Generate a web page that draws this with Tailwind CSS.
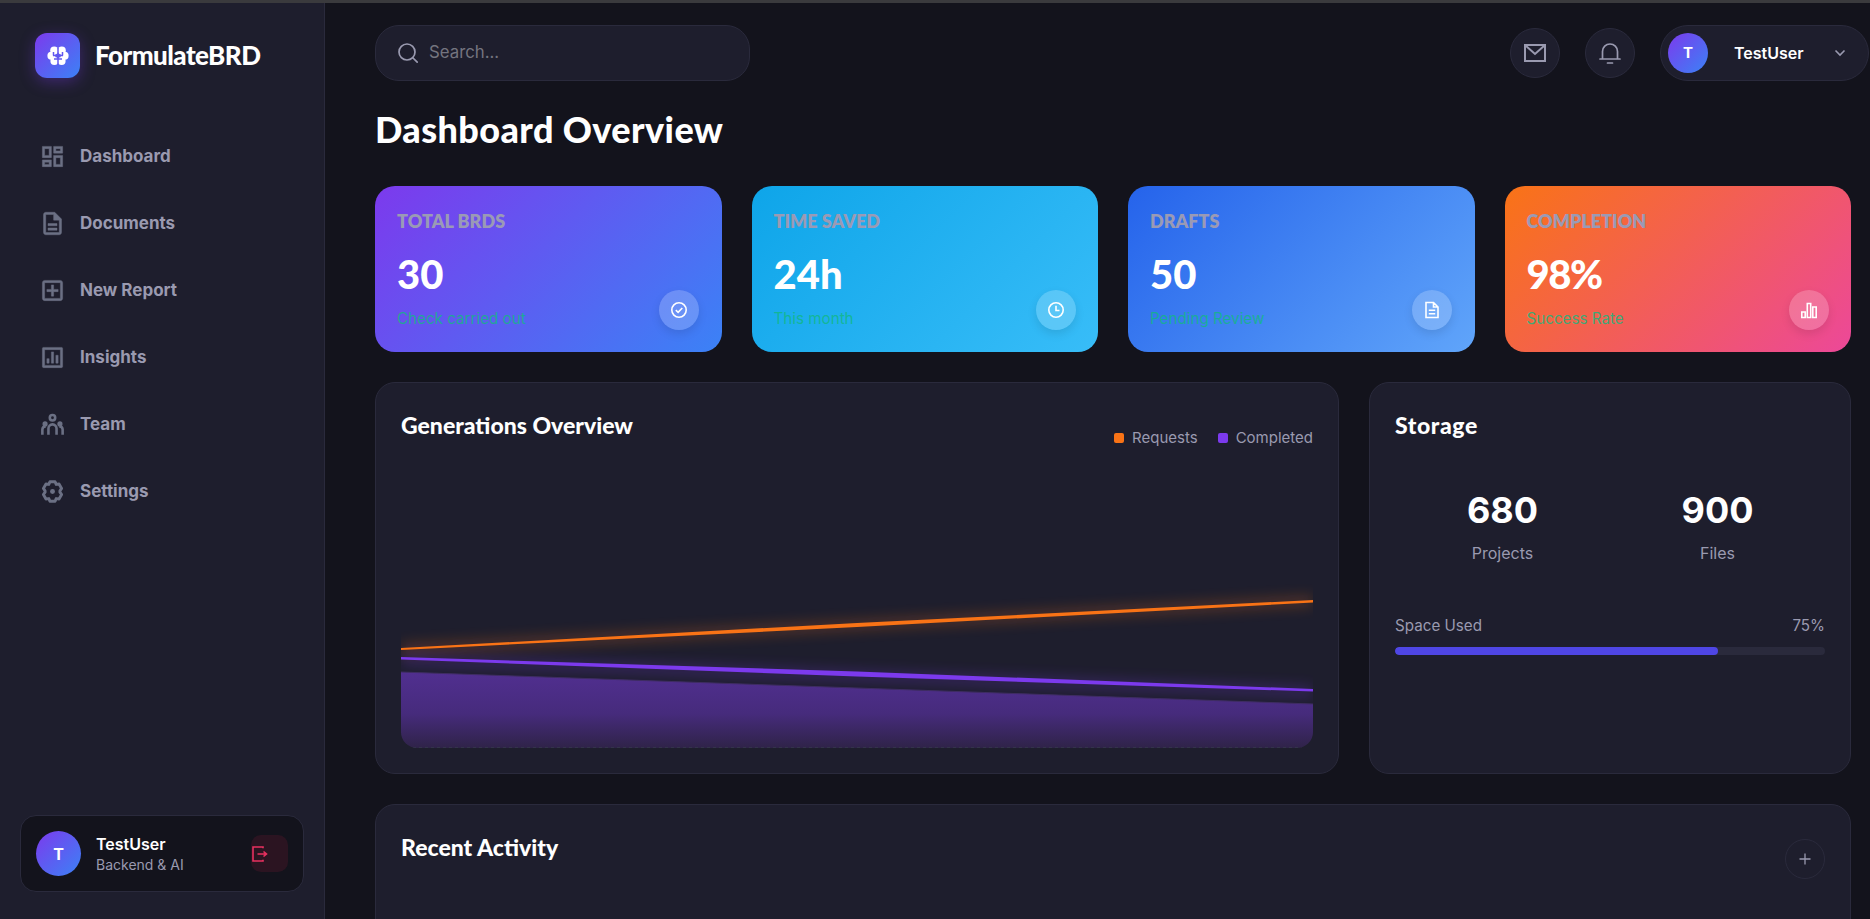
<!DOCTYPE html>
<html lang="en">
<head>
<meta charset="utf-8">
<title>FormulateBRD</title>
<script src="https://cdn.jsdelivr.net/npm/@tailwindcss/browser@4"></script>
</head>
<body class="h-screen overflow-hidden bg-[#13131c] font-['Inter',sans-serif] text-white">
<div class="h-[3px] bg-[#3a3a3d]"></div>
<div class="flex h-[916px] overflow-hidden">
  <!-- Sidebar -->
  <aside class="flex w-[325px] shrink-0 flex-col justify-between border-r border-[#2a2a3c] bg-[#1e1e2d] px-[20px] pb-[27px]">
    <div>
      <div class="flex items-center gap-[15px] pl-[15px] pt-[30px]">
        <div class="flex h-[45px] w-[45px] items-center justify-center rounded-[12px] bg-[linear-gradient(135deg,#7c3aed,#3b82f6)] shadow-[0_4px_15px_rgba(124,58,237,0.35)]">
          <svg class="h-[24px] w-[24px]" viewBox="0 0 24 24">
            <g fill="#fff"><circle cx="8.2" cy="6.6" r="4"/><circle cx="15.8" cy="6.6" r="4"/><circle cx="5.4" cy="11.8" r="4"/><circle cx="18.6" cy="11.8" r="4"/><circle cx="8.4" cy="17" r="4"/><circle cx="15.6" cy="17" r="4"/></g>
            <path d="M12 4v17M7 11.5h5M12 11.5h5M7.5 8v3.5M16.5 8v3.5M8 15h4M16 15h-4" fill="none" stroke="#6257f0" stroke-width="1.5"/>
          </svg>
        </div>
        <span class="font-['Lato',sans-serif] text-[26px] font-black tracking-[-0.55px]">FormulateBRD</span>
      </div>
      <nav class="mt-[45px] flex flex-col pl-[19px] text-[17px] font-bold text-[#9a9ab0]">
        <a class="flex h-[67px] items-center gap-[14px]"><svg class="h-[27px] w-[27px] shrink-0 fill-[#6b7084] stroke-[#6b7084] stroke-[0.4]" viewBox="0 0 24 24"><path d="M19 5v2h-4V5h4M9 5v6H5V5h4m10 8v6h-4v-6h4M9 17v2H5v-2h4M21 3h-8v6h8V3zM11 3H3v10h8V3zm10 8h-8v10h8V11zm-10 4H3v6h8v-6z"/></svg>Dashboard</a>
        <a class="flex h-[67px] items-center gap-[14px]"><svg class="h-[27px] w-[27px] shrink-0 fill-[#6b7084] stroke-[#6b7084] stroke-[0.4]" viewBox="0 0 24 24"><path d="M8 16h8v2H8zm0-4h8v2H8zm6-10H6c-1.100 0-2 .9-2 2v16c0 1.100.89 2 1.990 2H18c1.100 0 2-.9 2-2V8l-6-6zm4 18H6V4h7v5h5v11z"/></svg>Documents</a>
        <a class="flex h-[67px] items-center gap-[14px]"><svg class="h-[27px] w-[27px] shrink-0 fill-[#6b7084] stroke-[#6b7084] stroke-[0.4]" viewBox="0 0 24 24"><path d="M19 3H5c-1.110 0-2 .9-2 2v14c0 1.100.89 2 2 2h14c1.100 0 2-.9 2-2V5c0-1.100-.9-2-2-2zm0 16H5V5h14v14zm-8-2h2v-4h4v-2h-4V7h-2v4H7v2h4z"/></svg>New Report</a>
        <a class="flex h-[67px] items-center gap-[14px]"><svg class="h-[27px] w-[27px] shrink-0 fill-[#6b7084] stroke-[#6b7084] stroke-[0.4]" viewBox="0 0 24 24"><path d="M20 3H4c-.6 0-1 .4-1 1v16c0 .6.4 1 1 1h16c.6 0 1-.4 1-1V4c0-.6-.4-1-1-1zm-1 16H5V5h14v14zM7 13h2v4H7zm4-6h2v10h-2zm4 3h2v7h-2z"/></svg>Insights</a>
        <a class="flex h-[67px] items-center gap-[14px]"><svg class="h-[27px] w-[27px] shrink-0" viewBox="0 0 24 24" fill="none" stroke="#6b7084" stroke-width="2.300"><circle cx="12" cy="6" r="2.400"/><circle cx="5.400" cy="11.500" r="2.300" fill="#6b7084" stroke="none"/><circle cx="18.600" cy="11.500" r="2.300" fill="#6b7084" stroke="none"/><path d="M8.400 21v-5.500a3.600 3.600 0 0 1 7.200 0V21M3 21v-4.500c0-1.600 1.300-2.700 3-2.700M21 21v-4.500c0-1.600-1.300-2.700-3-2.700"/></svg>Team</a>
        <a class="flex h-[67px] items-center gap-[14px]"><svg class="h-[27px] w-[27px] shrink-0" viewBox="0 0 24 24" fill="none" stroke="#6b7084"><path stroke-width="2.600" stroke-linejoin="round" d="M9.700 3.400h4.600l1 2.300 2.500-.3 2.300 3.900-1.500 2.100 0 1.200 1.500 2.100-2.300 3.900-2.500-.3-1 2.300H9.700l-1-2.300-2.500.3-2.300-3.900 1.500-2.100 0-1.200-1.500-2.100 2.300-3.900 2.500.3z"/><circle cx="12" cy="12" r="2.200" fill="#6b7084" stroke="none"/></svg>Settings</a>
      </nav>
    </div>
    <div class="flex h-[77px] w-[284px] items-center rounded-[16px] border border-[#2a2a3c] bg-[#13131c] px-[15px]">
      <div class="flex h-[45px] w-[45px] shrink-0 items-center justify-center rounded-full bg-[linear-gradient(135deg,#7c3aed,#3b82f6)] text-[16px] font-bold">T</div>
      <div class="ml-[15px] flex-1">
        <div class="text-[16px] font-semibold leading-[22px]">TestUser</div>
        <div class="text-[14px] leading-[20px] text-[#9a9ab0]">Backend &amp; AI</div>
      </div>
      <div class="flex h-[37px] w-[37px] shrink-0 items-center rounded-[10px] bg-[#e11d48]/12">
        <svg class="h-[18px] w-[18px]" viewBox="0 0 18 18" fill="none" stroke="#e8305f" stroke-width="1.600"><path d="M12 3.200V2H2v14h10v-1.200M6.500 9h9M12.500 6.500 15.500 9l-3 2.500"/></svg>
      </div>
    </div>
  </aside>

  <!-- Main -->
  <main class="min-w-0 flex-1 pl-[50px] pr-px pt-[22px]">
    <header class="flex h-[56px] items-center justify-between">
      <div class="flex h-[56px] w-[375px] items-center gap-[10px] rounded-[24px] border border-[#2a2a3c] bg-[#1e1e2d] pl-[21px]">
        <svg class="h-[22px] w-[22px]" viewBox="0 0 22 22" fill="none" stroke="#9a9ab0" stroke-width="1.700" stroke-linecap="round"><circle cx="10" cy="10" r="8"/><path d="m16 16 4.200 4.200"/></svg>
        <span class="text-[16.8px] text-[#74747f]">Search...</span>
      </div>
      <div class="flex items-center">
        <button class="flex h-[50px] w-[50px] items-center justify-center rounded-full border border-[#2a2a3c] bg-[#1e1e2d]">
          <svg class="h-[22px] w-[22px]" viewBox="0 0 22 22" fill="none" stroke="#9a9ab0" stroke-width="2"><path d="M1 3h20v16H1zM1.500 3.500 11 12l9.500-8.500"/></svg>
        </button>
        <button class="ml-[25px] flex h-[50px] w-[50px] items-center justify-center rounded-full border border-[#2a2a3c] bg-[#1e1e2d]">
          <svg class="h-[24px] w-[24px]" viewBox="0 0 24 24" fill="none" stroke="#9a9ab0" stroke-width="1.700" stroke-linecap="round"><path d="M2 18h20M4.500 18v-7.500a7.500 7.500 0 0 1 15 0V18M9.500 22h5"/></svg>
        </button>
        <div class="ml-[25px] flex h-[56px] w-[209px] items-center rounded-[28px] border border-[#2a2a3c] bg-[#1e1e2d] pl-[7px]">
          <div class="flex h-[40px] w-[40px] shrink-0 items-center justify-center rounded-full bg-[linear-gradient(135deg,#7c3aed,#3b82f6)] text-[15px] font-bold">T</div>
          <span class="ml-[26px] text-[16px] font-semibold">TestUser</span>
          <svg class="ml-[30px] h-[12px] w-[12px]" viewBox="0 0 12 12" fill="none" stroke="#9a9ab0" stroke-width="1.600"><path d="m1.500 3.500 4.500 4.500 4.500-4.500"/></svg>
        </div>
      </div>
    </header>

    <div class="mr-[18px]">
      <h1 class="mt-[28px] font-['Lato',sans-serif] text-[36px] font-black leading-[40px] tracking-[0.4px]">Dashboard Overview</h1>

      <section class="mt-[37px] grid grid-cols-4 gap-[30px]">
        <div class="relative h-[166px] rounded-[20px] bg-[linear-gradient(135deg,#7c3aed,#3b82f6)] px-[22px] pt-[22px]">
          <div class="font-['Lato',sans-serif] text-[18px] font-extrabold uppercase leading-[26px] text-[#9a9ab5]">Total BRDs</div>
          <div class="mt-[16px] font-['Lato',sans-serif] text-[40px] font-black leading-[48px]">30</div>
          <div class="mt-[10px] text-[15.2px] leading-[22px] text-[#10b981]/80">Check carried out</div>
          <div class="absolute bottom-[22px] right-[23px] flex h-[40px] w-[40px] items-center justify-center rounded-full bg-white/20 shadow-[0_4px_10px_rgba(0,0,0,0.1)]">
            <svg class="h-[18px] w-[18px]" viewBox="0 0 18 18" fill="none" stroke="#fff" stroke-width="1.600"><circle cx="9" cy="9" r="7.200"/><path d="m5.800 9.200 2.300 2.200 4.200-4.400"/></svg>
          </div>
        </div>
        <div class="relative h-[166px] rounded-[20px] bg-[linear-gradient(135deg,#0ea5e9,#38bdf8)] px-[22px] pt-[22px]">
          <div class="font-['Lato',sans-serif] text-[18px] font-extrabold uppercase leading-[26px] text-[#9a9ab5]">Time Saved</div>
          <div class="mt-[16px] font-['Lato',sans-serif] text-[40px] font-black leading-[48px]">24h</div>
          <div class="mt-[10px] text-[15.2px] leading-[22px] text-[#10b981]/80">This month</div>
          <div class="absolute bottom-[22px] right-[22px] flex h-[40px] w-[40px] items-center justify-center rounded-full bg-white/20 shadow-[0_4px_10px_rgba(0,0,0,0.1)]">
            <svg class="h-[18px] w-[18px]" viewBox="0 0 18 18" fill="none" stroke="#fff" stroke-width="1.600"><circle cx="9" cy="9" r="7.200"/><path d="M9 4.800V9.500h3.500"/></svg>
          </div>
        </div>
        <div class="relative h-[166px] rounded-[20px] bg-[linear-gradient(135deg,#2563eb,#60a5fa)] px-[22px] pt-[22px]">
          <div class="font-['Lato',sans-serif] text-[18px] font-extrabold uppercase leading-[26px] text-[#9a9ab5]">Drafts</div>
          <div class="mt-[16px] font-['Lato',sans-serif] text-[40px] font-black leading-[48px]">50</div>
          <div class="mt-[10px] text-[15.2px] leading-[22px] text-[#10b981]/80">Pending Review</div>
          <div class="absolute bottom-[22px] right-[23px] flex h-[40px] w-[40px] items-center justify-center rounded-full bg-white/20 shadow-[0_4px_10px_rgba(0,0,0,0.1)]">
            <svg class="h-[18px] w-[18px]" viewBox="0 0 18 18" fill="none" stroke="#fff" stroke-width="1.600"><path d="M3 1.500h7.500L15 6v10.500H3zM10.500 1.500V6H15M5.800 9.300h6.400M5.800 12.800h6.400"/></svg>
          </div>
        </div>
        <div class="relative h-[166px] rounded-[20px] bg-[linear-gradient(135deg,#f97316,#ec4899)] px-[22px] pt-[22px]">
          <div class="font-['Lato',sans-serif] text-[18px] font-extrabold uppercase leading-[26px] text-[#9a9ab5]">Completion</div>
          <div class="mt-[16px] font-['Lato',sans-serif] text-[40px] font-black leading-[48px] tracking-[-1.5px]">98%</div>
          <div class="mt-[10px] text-[15.2px] leading-[22px] text-[#10b981]/80">Success Rate</div>
          <div class="absolute bottom-[22px] right-[22px] flex h-[40px] w-[40px] items-center justify-center rounded-full bg-white/20 shadow-[0_4px_10px_rgba(0,0,0,0.1)]">
            <svg class="h-[18px] w-[18px]" viewBox="0 0 18 18" fill="none" stroke="#fff" stroke-width="1.600"><path d="M1.800 11h3.400v5.500H1.800zM7.300 2.500h3.400v14H7.300zM12.800 6h3.400v10.500h-3.400z"/></svg>
          </div>
        </div>
      </section>

      <section class="mt-[30px] grid h-[392px] grid-cols-[964px_1fr] gap-[30px]">
        <div class="rounded-[20px] border border-[#2a2a3c] bg-[#1e1e2d] px-[25px] pt-[25px]">
          <div class="flex h-[39px] items-start justify-between">
            <h2 class="mt-px font-['Lato',sans-serif] text-[23px] font-black leading-[32px]">Generations Overview</h2>
            <div class="mt-[20px] flex items-center text-[15px] leading-[20px] text-[#9a9ab0]">
              <span class="h-[10px] w-[10px] rounded-[2px] bg-[#f97316]"></span><span class="ml-[8px]">Requests</span>
              <span class="ml-[20px] h-[10px] w-[10px] rounded-[2px] bg-[#7c3aed]"></span><span class="ml-[8px]">Completed</span>
            </div>
          </div>
          <div class="mt-[1px] h-[300px] overflow-hidden rounded-b-[16px]">
            <svg class="block h-[300px] w-[912px]" viewBox="0 0 912 300">
              <defs>
                <linearGradient id="fillG" x1="0" y1="224" x2="0" y2="300" gradientUnits="userSpaceOnUse"><stop offset="0" stop-color="#512f90"/><stop offset=".55" stop-color="#462b7c"/><stop offset="1" stop-color="#2f2348"/></linearGradient>
                <filter id="glow" filterUnits="userSpaceOnUse" x="-60" y="60" width="1032" height="260"><feGaussianBlur stdDeviation="7"/></filter>
              </defs>
              <path d="M0 201 912 153" stroke="#f97316" stroke-width="7" opacity=".36" filter="url(#glow)"/>
              <path d="M0 212 912 244" stroke="#7c3aed" stroke-width="9" opacity=".3" filter="url(#glow)"/>
              <path d="M0 224 912 256V300H0Z" fill="url(#fillG)"/>
              <path d="M0 224 912 256" stroke="#3f2d63" stroke-width="1" fill="none"/>
              <path d="M0 200 456 175 912 152V154.500L456 179 0 202Z" fill="#f97316"/>
              <path d="M0 209 456 223.500 912 241V243.500L456 228.500 0 211.500Z" fill="#7c3aed"/>
              <path d="M0 299.500H912" stroke="#33334a" stroke-width="1" stroke-dasharray="3 3"/>
            </svg>
          </div>
        </div>
        <div class="rounded-[20px] border border-[#2a2a3c] bg-[#1e1e2d] px-[25px] pt-[25px]">
          <h2 class="mt-px font-['Lato',sans-serif] text-[23px] font-black leading-[32px] tracking-[0.6px]">Storage</h2>
          <div class="mt-[47px] grid grid-cols-2">
            <div class="text-center">
              <div class="text-[36px] font-bold leading-[44px]">680</div>
              <div class="mt-[9px] text-[16px] leading-[24px] text-[#9a9ab0]">Projects</div>
            </div>
            <div class="text-center">
              <div class="text-[36px] font-bold leading-[44px]">900</div>
              <div class="mt-[9px] text-[16px] leading-[24px] text-[#9a9ab0]">Files</div>
            </div>
          </div>
          <div class="mt-[50px] flex justify-between text-[15.2px] leading-[22px] text-[#9a9ab0]">
            <span>Space Used</span><span>75%</span>
          </div>
          <div class="mt-[10px] h-[8px] overflow-hidden rounded-full bg-[#2a2a3c]">
            <div class="h-full rounded-full bg-[#4f46e5]" style="width:75%"></div>
          </div>
        </div>
      </section>

      <section class="mt-[30px] h-[200px] rounded-[20px] border border-[#2a2a3c] bg-[#1e1e2d] px-[25px] pt-[25px]">
        <div class="flex items-start justify-between">
          <h2 class="mt-px font-['Lato',sans-serif] text-[23px] font-black leading-[32px]">Recent Activity</h2>
          <button class="mt-[9px] flex h-[40px] w-[40px] items-center justify-center rounded-full border border-[#2a2a3c]">
            <svg class="h-[12px] w-[12px]" viewBox="0 0 12 12" stroke="#9a9ab0" stroke-width="1.300"><path d="M6 .5v11M.5 6h11"/></svg>
          </button>
        </div>
      </section>
    </div>
  </main>
</div>
</body>
</html>
